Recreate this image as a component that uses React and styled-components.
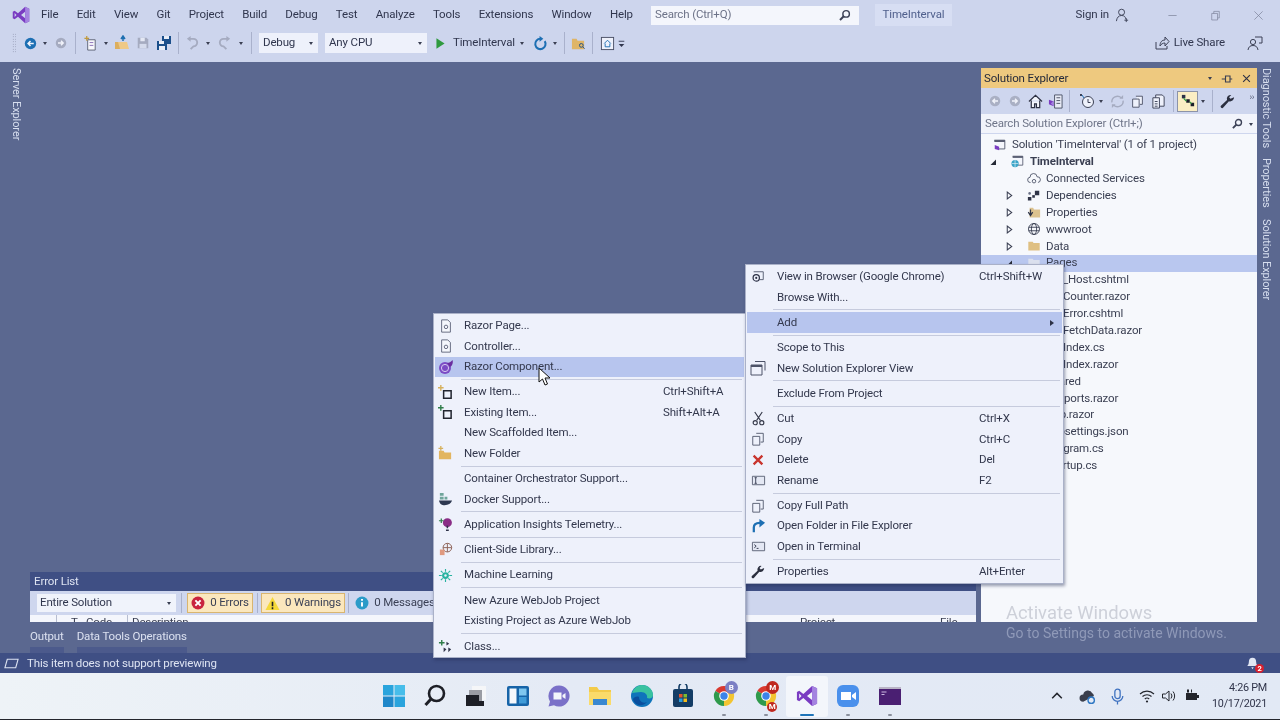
import React from 'react';
import styled, { createGlobalStyle } from 'styled-components';

const Global = createGlobalStyle`
  html, body { margin: 0; padding: 0; background: #5b6890; }
  * { box-sizing: border-box; }
`;

const FONT = `Roboto, "Noto Sans", "Liberation Sans", sans-serif`;

const Page = styled.div`
  position: relative; width: 1280px; height: 720px; overflow: hidden;
  display: flex; flex-direction: column; background: #5b6890;
  font: 11.5px/1 ${FONT}; letter-spacing: -0.15px; color: #2c3146; filter: blur(0.3px);
`;
const Header = styled.header`background: #cdd5ed; height: 62px; flex: none;`;
const MenuBar = styled.div`height: 30px; display: flex; align-items: center; padding-left: 12px;`;
const Menus = styled.nav`width: 621px; display: flex; gap: 18.3px; padding-left: 11px; flex: none; color: #30364e;`;
const SearchBox = styled.div`
  width: 208px; height: 19px; flex: none; background: #f4f6fc; display: flex; align-items: center;
  justify-content: space-between; padding: 0 8px 0 4px; color: #6d7388;
`;
const ProjectTag = styled.div`
  width: 77px; height: 22px; margin-left: 16px; flex: none; background: #d7def3; color: #4f5f8c;
  display: flex; align-items: center; justify-content: center;
`;
const SignIn = styled.div`margin-left: auto; display: flex; align-items: center; gap: 6px; margin-right: 21px; color: #30364e;`;
const WinBtn = styled.div`width: 43px; display: flex; justify-content: center; align-items: center; flex: none; color: #7a8098;`;

const ToolBar = styled.div`height: 32px; display: flex; align-items: center; padding-left: 12px; padding-bottom: 6px;`;
const Gripper = styled.div`
  width: 4px; height: 20px; margin-right: 4px; flex: none;
  background-image: radial-gradient(#8b92ab 0.7px, transparent 0.8px); background-size: 2.5px 2.5px;
`;
const Slot = styled.div`width: ${p => p.$w}px; margin-left: ${p => p.$ml || 0}px; display: flex; justify-content: center; align-items: center; flex: none;`;
const Sep = styled.div`width: ${p => p.$w || 6}px; height: ${p => p.$h || 22}px; flex: none; display: flex; justify-content: center;
  &::after { content: ''; width: 1px; height: 100%; background: #a9b1cc; }`;
const Caret = styled.span`width: 0; height: 0; flex: none; border-left: 2.5px solid transparent; border-right: 2.5px solid transparent; border-top: 3px solid ${p => p.$c || '#3a3f52'};`;
const Combo = styled.div`
  width: ${p => p.$w}px; height: 20px; margin-left: ${p => p.$ml || 0}px; flex: none; background: #eef1fb; color: #30364e;
  display: flex; align-items: center; justify-content: space-between; padding: 0 5px 0 4px;
`;
const ToolLabel = styled.span`width: 61px; flex: none; color: #30364e; white-space: nowrap;`;
const LiveShare = styled.div`margin-left: auto; display: flex; align-items: center; gap: 4px; color: #30364e;`;
const Feedback = styled.div`margin-left: 22px; margin-right: 17px; display: flex;`;

const Workspace = styled.main`flex: 1; display: flex; min-height: 0;`;
const Rail = styled.aside`
  width: ${p => p.$w}px; flex: none; display: flex; flex-direction: column; align-items: center; gap: 10.5px;
  padding: 6px ${p => p.$pr || 0}px 0 ${p => p.$pl || 0}px;
`;
const RailLabel = styled.span`writing-mode: vertical-rl; color: #d7deef; font-size: 11px; line-height: 12px; white-space: nowrap; letter-spacing: -0.1px;`;
const Center = styled.section`flex: 1; display: flex; flex-direction: column; justify-content: flex-end; min-width: 0;`;
const ErrorPanel = styled.div`margin-right: 5px; height: 50px; flex: none; display: flex; flex-direction: column;`;
const ErrorTitle = styled.div`height: 19px; background: #3f4f84; color: #dde3f2; display: flex; align-items: center; padding-left: 4px; flex: none;`;
const ErrorTools = styled.div`height: 24px; background: #ced6ee; display: flex; align-items: center; padding-left: 7px; flex: none;`;
const ScopeCombo = styled(Combo)`width: 139px; height: 18px; color: #30364e; padding-left: 3px; background: #f0f3fb;`;
const Filter = styled.div`
  height: 20px; padding: 0 2px; width: ${p => p.$w}px; flex: none; display: flex; align-items: center; gap: 5px; white-space: nowrap;
  justify-content: center;
  ${p => p.$on && 'background: #fbe7bd; border: 1px solid #d9b56f;'} color: #3b4156;
`;
const ColumnRow = styled.div`height: 7px; background: #f4f6fc; overflow: hidden; display: flex; flex: none; color: #3a3f52; line-height: 15px; position: relative;`;
const Col = styled.span`width: ${p => p.$w}px; flex: none; padding-left: ${p => p.$p || 0}px; border-left: ${p => p.$b ? '1px solid #b7bdd0' : 'none'};`;
const TabRow = styled.div`height: 31px; flex: none; display: flex; gap: 13px;`;
const Tab = styled.div`
  color: #dbe1f0; display: flex; flex-direction: column; justify-content: flex-end; position: relative; height: 31px; white-space: nowrap;
  &::before { content: ''; order: 2; height: 6px; background: #4c5a8c; margin-top: 5px; }
`;

const SolPanel = styled.section`width: 276px; flex: none; margin: 6px 0 31px; display: flex; flex-direction: column;`;
const SolTitle = styled.div`height: 20px; background: #eec97f; color: #252a3a; display: flex; align-items: center; padding: 1px 6px 0 3px; gap: 9px; flex: none;`;
const SolName = styled.span`margin-right: auto;`;
const SolTools = styled.div`height: 26px; background: #ced6ee; display: flex; align-items: center; padding-left: 4px; flex: none;`;
const ActiveTool = styled.div`width: 21px; height: 21px; margin-left: 3px; background: #fbeec4; border: 1px solid #8c93a8; display: flex; align-items: center; justify-content: center; flex: none;`;
const More = styled.span`margin-left: auto; margin-right: 3px; margin-top: -8px; color: #555b73; font-size: 9px; letter-spacing: -.5px;`;
const SolSearch = styled.div`height: 20px; background: #f2f4fb; display: flex; align-items: center; padding: 1px 4px 0 4px; color: #6f7589; gap: 6px; flex: none; border-bottom: 1px solid #ced6ee;`;
const SolSearchText = styled.span`margin-right: auto;`;
const Tree = styled.div`flex: 1; background: #f6f8fc; padding-top: 2.5px; overflow: hidden;`;
const TreeRow = styled.div`
  height: 16.9px; display: flex; align-items: center; padding-left: ${p => p.$pad}px; white-space: nowrap;
  color: #3a3f52; font-weight: ${p => p.$bold ? 700 : 400}; ${p => p.$sel && 'background: #b9c7ef;'}
`;
const Arrow = styled.span`width: 26px; flex: none; padding-left: 4px; display: flex;`;
const TreeIcon = styled.span`width: ${p => p.$w || 19}px; flex: none; display: flex;`;

const StatusBar = styled.footer`height: 20px; flex: none; background: #3f4f84; color: #dde3f2; display: flex; align-items: center; padding: 1px 21px 0 4px; gap: 8px;`;
const Bell = styled.span`margin-left: auto; position: relative; display: flex;`;
const BellCount = styled.b`position: absolute; right: -5px; bottom: -3px; width: 9px; height: 9px; border-radius: 50%; background: #d8202f; color: #fff; font-size: 7.5px; line-height: 9px; text-align: center;`;

const Taskbar = styled.footer`
  height: 47px; flex: none; padding: 0 13px 0 373px; display: flex; align-items: center;
  background: linear-gradient(90deg, #eef3f7 0%, #e4eaf5 45%, #e2e9f5 100%); border-bottom: 1.5px solid #23252c; color: #2b2f3d;
`;
const TaskSlot = styled.div`
  width: 41.35px; height: 41px; flex: none; display: flex; align-items: center; justify-content: center; position: relative;
  ${p => p.$active && 'background: #f3f6fb; border-radius: 3px;'}
  ${p => p.$mark && `&::after { content: ''; position: absolute; bottom: 1px; left: 50%; transform: translateX(-50%); height: 2px; border-radius: 1px;
    width: ${p.$active ? 14 : 4}px; background: ${p.$active ? '#1f74b8' : '#8a8f9c'}; }`}
`;
const TaskBadge = styled.b`
  position: absolute; width: ${p => p.$s || 13}px; height: ${p => p.$s || 13}px; border-radius: 50%; background: ${p => p.$c}; color: #fff;
  top: ${p => p.$t}px; left: ${p => p.$l}px; font-size: 8px; line-height: ${p => p.$s || 13}px; text-align: center;
`;
const Tray = styled.div`margin-left: auto; display: flex; align-items: center; color: #2b2f3d;`;
const TraySlot = styled.div`width: ${p => p.$w}px; flex: none; display: flex; justify-content: center;`;
const Clock = styled.div`margin-left: 5px; padding-top: 1px; width: 54px; display: flex; flex-direction: column; align-items: flex-end; gap: 4.5px; font-size: 10.8px; letter-spacing: -0.25px; color: #30344a;`;

const CtxMenu = styled.div`
  position: absolute; left: ${p => p.$l}px; top: ${p => p.$t}px; width: ${p => p.$w}px; height: ${p => p.$h}px;
  background: #eef1fb; border: 1px solid #aab1c8; padding: 1.5px 1px 1px; box-shadow: 1px 2px 3px rgba(30,40,80,.45); color: #33384d;
`;
const CtxRow = styled.div`
  height: 20.5px; display: grid; grid-template-columns: ${p => p.$ic}px ${p => p.$lb}px 1fr; align-items: center; white-space: nowrap;
  ${p => p.$hl && 'background: #b7c5ee;'}
`;
const CtxIcon = styled.span`display: flex; justify-content: center; align-items: center; padding-right: ${p => p.$pr}px;`;
const CtxSub = styled.span`justify-self: end; margin-right: 8px; width: 0; height: 0; border-left: 4px solid #2c3146; border-top: 3px solid transparent; border-bottom: 3px solid transparent;`;
const CtxSep = styled.div`height: 4.8px; margin-left: ${p => p.$m}px; margin-right: 2px; display: flex; align-items: center;
  &::after { content: ''; flex: 1; height: 1px; background: #c6cbdd; }`;
const Cursor = styled.svg`position: absolute; left: 538px; top: 367px; width: 13px; height: 19px;`;
const Watermark = styled.div`position: absolute; left: 1006px; top: 603px; color: #cdd0d9; font-size: 18.4px; line-height: 19px; letter-spacing: 0; white-space: nowrap;
  & small { display: block; font-size: 14px; color: #8f99b8; margin-top: 3px; line-height: 16px; }`;

const Svg = styled.svg.attrs(p => ({ viewBox: p.$vb || '0 0 16 16' }))`width: ${p => p.$s || 16}px; height: ${p => p.$s || 16}px; flex: none; display: block;`;

const VsLogo = ({ s = 18 }) => (
  <Svg $s={s} $vb="0 0 24 24">
    <path fill="#7a3cc2" d="M17.5 1 23 3.5v17L17.5 23 8 14.2l-4.5 3.4L1 16.4V7.6l2.5-1.2L8 9.8zM17.5 7.6 12 12l5.5 4.4zM3.5 9.4v5.2L6 12z" fillRule="evenodd" />
    <path fill="#a483e0" d="M17.5 1 23 3.5v17L17.5 23v-6.6V7.6z" />
  </Svg>
);
const Glass = ({ s = 13, c = '#3c4156' }) => (
  <Svg $s={s}><circle cx="10" cy="6" r="4" fill="none" stroke={c} strokeWidth="1.8" /><path d="M7 9 2.5 13.5" stroke={c} strokeWidth="2.4" /></Svg>
);
const CircleNav = ({ c = '#1d6fb3', s = 13, flip }) => (
  <Svg $s={s}><circle cx="8" cy="8" r="7" fill={c} /><path d={flip ? 'M4 8h7M8 5l3 3-3 3' : 'M12 8H5M8 5 5 8l3 3'} fill="none" stroke="#f2f4fb" strokeWidth="1.8" /></Svg>
);
const NewProj = () => (
  <Svg $s={15}><path d="M5 4h8v11H5z" fill="#f7f8fc" stroke="#5d6376" /><path d="M7 7h4M7 10h4" stroke="#8a6fb5" /><path d="M4 0v5M1.5 2.5h5" stroke="#c19a3c" strokeWidth="1.3" /></Svg>
);
const OpenFolder = () => (
  <Svg $s={16}><path d="M1 7h10l-1 7H1z" fill="#dcae5e" /><path d="M4 7l2 7h9l-2-7z" fill="#efc987" /><path d="M9 6V2M7 4l2-3 2 3" fill="none" stroke="#1e6fb0" strokeWidth="1.5" /></Svg>
);
const Save = ({ c = '#a5abc0' }) => (
  <Svg $s={14}><path d="M2 2h10l2 2v10H2z" fill={c} /><path d="M5 2h5v4H5z" fill="#e4e8f4" /><path d="M4 9h8v5H4z" fill="#d5dbec" /></Svg>
);
const SaveAll = () => (
  <Svg $s={16}><path d="M6 1h9v8H6z" fill="#1b4f8b" /><path d="M8 1h5v3H8z" fill="#e8edf7" /><path d="M1 6h10v9H1z" fill="#1b4f8b" /><path d="M3 6h5v3H3zM3 11h6v4H3z" fill="#e8edf7" /></Svg>
);
const Undo = ({ flip }) => (
  <Svg $s={15} style={flip ? { transform: 'scaleX(-1)' } : undefined}><path d="M4 3h5a4 4 0 0 1 0 8l-3 3" fill="none" stroke="#a5abc0" strokeWidth="2" /><path d="M6 0 2 3l4 3z" fill="#a5abc0" /></Svg>
);
const Play = () => (<Svg $s={13}><path d="M3 1.5 13 8 3 14.5z" fill="#2f9a3f" /></Svg>);
const Refresh = ({ s = 15 }) => (
  <Svg $s={s}><path d="M12.5 5.5A5.5 5.5 0 1 1 8 3" fill="none" stroke="#1d6fb3" strokeWidth="2.2" /><path d="M7 0l4 3-4 3z" fill="#1d6fb3" /></Svg>
);
const FindFolder = () => (
  <Svg $s={15}><path d="M1 3h5l1 2h7v9H1z" fill="#dfb567" /><circle cx="11" cy="10" r="2" fill="none" stroke="#1d4f8b" /><path d="m12.5 11.5 2 2" stroke="#1d4f8b" /></Svg>
);
const BoxHome = () => (
  <Svg $s={15}><rect x="1.5" y="1.5" width="13" height="13" fill="#eef1fb" stroke="#4a5066" /><path d="M4.5 8 8 4.5 11.5 8M5.5 8v3.5h5V8" fill="none" stroke="#1d6fb3" /></Svg>
);
const Grip = () => (<Svg $s={9}><path d="M3 4h10" stroke="#30364e" strokeWidth="1.6" /><path d="M3 9h10l-5 5z" fill="#30364e" /></Svg>);
const ShareIcon = () => (
  <Svg $s={16}><path d="M2 7v7h11v-3" fill="none" stroke="#3c4156" /><path d="M6 11c0-4 2-6 5-6V2l4 4.5L11 11V8c-2 0-4 1-5 3z" fill="none" stroke="#3c4156" /></Svg>
);
const UserPlus = () => (
  <Svg $s={15}><circle cx="7" cy="4.5" r="3.2" fill="none" stroke="#3c4156" /><path d="M1.5 14c.5-4 2.5-6 5.5-6s4 1.5 4.8 4M12 11v4M10 13h4" fill="none" stroke="#3c4156" /></Svg>
);
const FeedbackIco = () => (
  <Svg $s={16}><circle cx="6" cy="7" r="2.6" fill="none" stroke="#3c4156" /><path d="M1 15c.5-3 2-4.5 5-4.5s4.5 1.5 5 4.5M8 2h7v6h-3" fill="none" stroke="#3c4156" /></Svg>
);
const Home = () => (<Svg $s={15}><path d="M1 8 8 1.5 15 8M3.5 7v7.5h3.5v-4h2v4h3.5V7" fill="#f4f6fc" stroke="#2e3244" strokeWidth="1.3" /></Svg>);
const VsDoc = () => (<Svg $s={15}><path d="M7 1h8v14H7z" fill="#e8ebf6" stroke="#4d5368" /><path d="M9 4h4M9 7h4M9 10h4" stroke="#4d5368" /><path d="M1 6l5 2v5l-5-2z" fill="#7a3cc2" /><path d="M6 7 3 10l3 3z" fill="#a483e0" /></Svg>);
const ClockIco = () => (<Svg $s={16}><circle cx="9" cy="9" r="5.5" fill="#eef1fb" stroke="#3c4156" /><path d="M9 6v3.5h2.5" fill="none" stroke="#3c4156" /><path d="M1 1h2v2H1z" fill="#3c4156" /><path d="M3 2l2 3" stroke="#1d6fb3" /></Svg>);
const Sync = () => (<Svg $s={15}><path d="M2 9a6 6 0 0 1 10-5M14 7a6 6 0 0 1-10 5" fill="none" stroke="#a5abc0" strokeWidth="1.5" /><path d="M14 1v4h-4zM2 15v-4h4z" fill="#a5abc0" /></Svg>);
const CopyIco = ({ s = 14, c = '#3c4156' }) => (<Svg $s={s}><path d="M6 1.5h8v10H11" fill="#eef1fb" stroke={c} /><path d="M2 5h8v10H2z" fill="#eef1fb" stroke={c} /></Svg>);
const Pages2 = () => (<Svg $s={15}><path d="M5 1h7l2 2v10H5z" fill="#eef1fb" stroke="#3c4156" /><path d="M2 4h7v11H2z" fill="#eef1fb" stroke="#3c4156" /><path d="M4 8h3M4 10.5h3M4 13h3" stroke="#3c4156" /></Svg>);
const Hierarchy = () => (<Svg $s={14}><path d="M1 1h4v4H1z" fill="#2c3146" /><path d="M6 6h4v4H6zM11 10h4v4h-4z" fill="#1b1e2a" /><path d="M3 5l3 3M10 9l2 2" stroke="#2f9a3f" strokeWidth="1.4" /></Svg>);
const Wrench = ({ s = 15 }) => (<Svg $s={s}><path d="M15 3.5a4.2 4.2 0 0 1-5.5 4.2L3.5 14.5a1.6 1.6 0 0 1-2.5-2l6.5-6A4.2 4.2 0 0 1 12 1L9.7 3.5l1.5 1.6z" fill="#2b2f3f" /></Svg>);
const SolIco = () => (<Svg $s={14}><path d="M1.5 2.5h12v10h-7" fill="#f4f6fc" stroke="#4d5368" /><path d="M1.5 2.5h12v2h-12z" fill="#4d5368" /><path d="M2 8l5 2v4l-5-1.5z" fill="#7a3cc2" /></Svg>);
const ProjIco = () => (<Svg $s={13}><path d="M2 1.5h12.5v11H8" fill="#f4f6fc" stroke="#4d5368" /><path d="M2 1.5h12.5v2H2z" fill="#4d5368" /><circle cx="5" cy="10.5" r="4.5" fill="#3ba5c8" /><path d="M1 10.5h8M5 6v9" stroke="#e4f2f8" strokeWidth=".8" /></Svg>);
const CloudIco = () => (<Svg $s={14}><path d="M4 12a3 3 0 0 1-.5-6 4 4 0 0 1 8-.5 3 3 0 0 1 1 6.5" fill="none" stroke="#4d5368" /><circle cx="8" cy="10.5" r="2" fill="none" stroke="#4d5368" /></Svg>);
const DepsIco = () => (<Svg $s={14}><path d="M9 2h5v5H9zM1 9h4v4H1z" fill="#2f3447" /><path d="M6 7h3v3H6z" fill="#2f3447" /><circle cx="3" cy="5" r="1.5" fill="#6b7186" /></Svg>);
const PropFolder = () => (<Svg $s={14}><path d="M3 2h4l1 2h7v9H3z" fill="#dcc28f" /><path d="M4 4v6M1.5 7 4 11l2.5-4" fill="none" stroke="#2f3447" strokeWidth="1.4" /></Svg>);
const Globe = () => (<Svg $s={14}><circle cx="8" cy="8" r="6.3" fill="none" stroke="#353a4e" /><ellipse cx="8" cy="8" rx="3" ry="6.3" fill="none" stroke="#353a4e" /><path d="M2 6h12M2 10h12" stroke="#353a4e" /></Svg>);
const Folder = ({ c = '#dfc083' }) => (<Svg $s={14}><path d="M1.5 3h5l1 1.5h7V13h-13z" fill={c} /></Svg>);
const FileIco = () => (<Svg $s={13}><path d="M3 1h7l3 3v11H3z" fill="#f4f6fc" stroke="#6b7186" /></Svg>);
const ArrowOpen = () => (<Svg $s={8}><path d="M14 3v11H3z" fill="#252935" /></Svg>);
const ArrowClosed = () => (<Svg $s={9}><path d="M4 2v12l8-6z" fill="none" stroke="#3a3f52" strokeWidth="1.8" /></Svg>);

const PageDoc = () => (<Svg $s={14}><path d="M3 1h7l3 3v11H3z" fill="#f4f6fc" stroke="#565c74" /><circle cx="8" cy="9" r="2" fill="none" stroke="#565c74" /></Svg>);
const Razor = () => (<Svg $s={16}><circle cx="7" cy="9" r="6" fill="#7b4bc4" /><circle cx="7" cy="9" r="3.6" fill="none" stroke="#d5c9f0" /><path d="M9 4c2 0 4-1 5.5-3 1 3-.5 6-2.5 7z" fill="#6a2d9f" /></Svg>);
const NewItem = ({ c = '#d6b15e' }) => (<Svg $s={15}><path d="M6 6h8v8H6z" fill="#eef1fb" stroke="#22252f" strokeWidth="1.6" /><path d="M3 0v6M0 3h6" stroke={c} strokeWidth="1.5" /></Svg>);
const NewFolder = () => (<Svg $s={15}><path d="M1 5h5l1 2h7v7H1z" fill="#e2b560" /><path d="M3 0v5M.5 2.5h5" stroke="#d6b15e" strokeWidth="1.4" /></Svg>);
const Docker = () => (<Svg $s={15}><path d="M2 1h4v3H2zM2 5h4v3H2zM7 5h3v3H7z" fill="#6fa59b" /><path d="M1 9h14c-1 3-4 5-8 5-3 0-5-1-6-5z" fill="#2d3750" /></Svg>);
const Insights = () => (<Svg $s={15}><circle cx="10" cy="6" r="4.8" fill="#8a2d86" /><path d="M10 9v3M8.5 14h3" stroke="#30344a" strokeWidth="1.6" /><path d="M1 4h5M3.5 1.5v5" stroke="#2f7d4a" strokeWidth="1.3" /></Svg>);
const ClientLib = () => (<Svg $s={15}><circle cx="10" cy="6" r="4.6" fill="none" stroke="#8b5e52" /><path d="M5.5 6h9M10 1.5v9" stroke="#8b5e52" /><path d="M2 8h5v6H2z" fill="#e09a80" /></Svg>);
const Ml = () => (<Svg $s={15}><circle cx="8" cy="8" r="3.6" fill="#27b3a0" /><circle cx="8" cy="8" r="1.3" fill="#eef1fb" /><path d="M8 1v3M8 12v3M1 8h3M12 8h3M3 3l2 2M11 11l2 2M13 3l-2 2M5 11l-2 2" stroke="#27b3a0" strokeWidth="1.2" /></Svg>);
const ClassIco = () => (<Svg $s={15}><path d="M1 4h6M4 1v6" stroke="#2f7d4a" strokeWidth="1.5" /><path d="M9 3l3 2-3 2zM6 9l3 2-3 3zM11 9l3 2-3 3z" fill="#30344a" /></Svg>);
const ViewB = () => (<Svg $s={14}><path d="M3 2h11v9h-4" fill="none" stroke="#4d5368" /><circle cx="6" cy="9" r="3.6" fill="#eef1fb" stroke="#2c3146" strokeWidth="1.4" /><circle cx="6" cy="9" r="1.2" fill="#2c3146" /></Svg>);
const NewView = () => (<Svg $s={16}><path d="M5 1.5h10v9" fill="none" stroke="#4d5368" /><path d="M1 5h11v10H1z" fill="#eef1fb" stroke="#4d5368" /><path d="M1 5h11v2H1z" fill="#4d5368" /></Svg>);
const Cut = () => (<Svg $s={15}><path d="M4 1l6 9M12 1 6 10" stroke="#343848" strokeWidth="1.2" /><circle cx="4.5" cy="12.5" r="2.2" fill="none" stroke="#343848" strokeWidth="1.2" /><circle cx="11.5" cy="12.5" r="2.2" fill="none" stroke="#343848" strokeWidth="1.2" /></Svg>);
const Del = () => (<Svg $s={14}><path d="M3 3l10 10M13 3 3 13" stroke="#c8342d" strokeWidth="2.6" /></Svg>);
const Rename = () => (<Svg $s={15}><path d="M1.5 3.5h13v9h-13z" fill="#e4e8f4" stroke="#5d6376" /><path d="M5 5v6M3.8 5h2.4M3.8 11h2.4" stroke="#3c4156" /></Svg>);
const OpenArrow = () => (<Svg $s={15}><path d="M3 14V9c0-3 2-5 6-5h2" fill="none" stroke="#1d6fb3" strokeWidth="2.4" /><path d="M9 0l6 4-6 5z" fill="#1d6fb3" /></Svg>);
const TermIco = () => (<Svg $s={15}><path d="M1.5 3.5h13v9h-13z" fill="#e4e8f4" stroke="#5d6376" /><path d="M3.5 6l2 1.7-2 1.7M6 10h2" fill="none" stroke="#2c3146" /></Svg>);

const ErrIco = () => (<Svg $s={14}><circle cx="8" cy="8" r="7.4" fill="#c9243f" /><path d="M5 5l6 6M11 5l-6 6" stroke="#fff" strokeWidth="2.2" /></Svg>);
const WarnIco = () => (<Svg $s={15}><path d="M8 1l7.5 14H.5z" fill="#f5d83a" /><path d="M8 6v5M8 12v2" stroke="#222" strokeWidth="1.7" /></Svg>);
const InfoIco = () => (<Svg $s={14}><circle cx="8" cy="8" r="7.4" fill="#2b9bc8" /><path d="M8 7v5M8 3.5v2" stroke="#fff" strokeWidth="2.2" /></Svg>);
const Preview = () => (<Svg $s={15} $vb="0 0 16 12"><path d="M3.5 1.5H15l-2.5 9H1z" fill="none" stroke="#dde3f2" strokeWidth="1.2" /></Svg>);
const BellIco = () => (<Svg $s={13}><path d="M8 1c3 0 4.500 2 4.500 5s1.500 4 2 5h-13c.5-1 2-2 2-5s1.500-5 4.500-5zM6.500 12.500h3L8 15z" fill="#e1e6f3" /></Svg>);

const T = ({ children }) => <Svg $s={24} $vb="0 0 24 24">{children}</Svg>;
const WinIco = () => (<T><path d="M1 1h10.500v10.500H1z" fill="#2aa4dd" /><path d="M12.500 1H23v10.500H12.500z" fill="#47bdea" /><path d="M1 12.500h10.500V23H1z" fill="#1f87c9" /><path d="M12.500 12.500H23V23H12.500z" fill="#2aa4dd" /></T>);
const TaskSearch = () => (<T><circle cx="13.500" cy="9.500" r="7.500" fill="none" stroke="#1d1f26" strokeWidth="2.600" /><path d="M8 15l-5.500 6" stroke="#1d1f26" strokeWidth="3" /></T>);
const TaskView = () => (<T><path d="M8 2h14v14H8z" fill="#f5f6f8" /><path d="M5 6h13v12H5z" fill="#9a9ca3" /><path d="M2 11h13v11H2z" fill="#1d1f26" /><path d="M15 17h5v5h-5z" fill="#1d1f26" /></T>);
const Widgets = () => (<T><rect x="1" y="2" width="22" height="20" rx="2" fill="#1764a8" /><path d="M3.500 4.500h7v15h-7z" fill="#f5f8fc" /><path d="M13 4.500h7.500v7H13z" fill="#7fc6ee" /><path d="M13 13h7.500v6.500H13z" fill="#3f9bd8" /></T>);
const Chat = () => (<T><path d="M12 1.500a10.500 10.500 0 1 1-5 19.700L1.500 22.500 3 17.400A10.500 10.500 0 0 1 12 1.500z" fill="#7a70c8" /><path d="M6.500 8.500h8v7h-8zM15.500 11l3-2v6l-3-2z" fill="#f4f5fb" /></T>);
const Explorer = () => (<T><path d="M1 3h8l2 3h12v15H1z" fill="#f3cb4a" /><path d="M1 8h22v13H1z" fill="#fadb6a" /><path d="M5 15h14v6H5z" fill="#3a88d0" /></T>);
const Edge = () => (<T><circle cx="12" cy="12" r="11" fill="#0f74bb" /><path d="M2 9C4 3 9 1 12 1c6 0 11 4.500 11 10 0 3-3 4-6 3 1-3-2-6-6-6-4 0-7 1-9 1z" fill="#39c2a0" /><path d="M9 13c0 4 4 7 8 5-5 6-13 3-14-3 1-2 4-3 6-2z" fill="#0a4f9e" /></T>);
const Store = () => (<T><path d="M8 5V3a4 4 0 0 1 8 0v2" fill="none" stroke="#143d66" strokeWidth="1.600" /><rect x="2" y="5" width="20" height="18" rx="2" fill="#143d66" /><path d="M8 10h3.500v3.500H8z" fill="#e5552c" /><path d="M12.500 10H16v3.500h-3.500z" fill="#7dbb2f" /><path d="M8 14.500h3.500V18H8z" fill="#2a9fe0" /><path d="M12.500 14.500H16V18h-3.500z" fill="#f5bc1c" /></T>);
const Chrome = () => (<T><path d="M12 12 3.300 7a10 10 0 0 1 17.400 0z" fill="#d9392f" /><path d="M12 12l8.700-5A10 10 0 0 1 12 22z" fill="#f3c531" /><path d="M12 12v10A10 10 0 0 1 3.300 7z" fill="#2f9a4c" /><circle cx="12" cy="12" r="4.800" fill="#fff" /><circle cx="12" cy="12" r="3.700" fill="#3d83e8" /></T>);
const ZoomIco = () => (<T><rect x="1" y="1" width="22" height="22" rx="6" fill="#4a90ec" /><path d="M5 8h10v8H5zM16 11l4-3v8l-4-3z" fill="#fff" /></T>);
const TermApp = () => (<T><path d="M1 3h22v18H1z" fill="#4a1f72" /><path d="M1 3h22v2H1z" fill="#b9b4c6" /><path d="M3.500 8h5M3.500 10.500h3" stroke="#c9b8e0" strokeWidth="1.200" /></T>);
const Chevron = () => (<Svg $s={14}><path d="M2.500 10.500 8 5l5.500 5.500" fill="none" stroke="#23252c" strokeWidth="1.700" /></Svg>);
const CloudSync = () => (<Svg $s={17}><path d="M4 13a3.500 3.500 0 0 1 0-7 4.500 4.500 0 0 1 8.500-1c1 .5 1.500 1.500 1.500 2.500" fill="#3a3e4c" /><circle cx="11.500" cy="11.500" r="3" fill="none" stroke="#2f78c4" strokeWidth="1.300" /></Svg>);
const Mic = () => (<Svg $s={17}><rect x="5.500" y="1" width="5" height="9" rx="2.500" fill="none" stroke="#3f72c0" strokeWidth="1.200" /><path d="M3 7.500a5 5 0 0 0 10 0M8 12.500V15.500" fill="none" stroke="#3f72c0" strokeWidth="1.200" /></Svg>);
const Wifi = () => (<Svg $s={16}><path d="M1 6a10 10 0 0 1 14 0M3.500 8.500a6.500 6.500 0 0 1 9 0M5.800 11a3.200 3.200 0 0 1 4.400 0" fill="none" stroke="#23252c" strokeWidth="1.100" /><circle cx="8" cy="13.500" r="1.100" fill="#23252c" /></Svg>);
const Speaker = () => (<Svg $s={16}><path d="M1.500 6h3L8 3v10L4.500 10h-3z" fill="none" stroke="#23252c" /><path d="M10 5.500a4 4 0 0 1 0 5M12 3.500a7 7 0 0 1 0 9" fill="none" stroke="#23252c" /></Svg>);
const Battery = () => (<Svg $s={16}><path d="M2 5h11v7H2z" fill="#23252c" /><path d="M13 7h2v3h-2zM3 1.500h2v3H3zM7 1.500h1v3H7z" fill="#23252c" /></Svg>);

const menuBar = ['File', 'Edit', 'View', 'Git', 'Project', 'Build', 'Debug', 'Test', 'Analyze', 'Tools', 'Extensions', 'Window', 'Help'];
const tree = [
  { t: "Solution 'TimeInterval' (1 of 1 project)", d: 0, i: <SolIco /> },
  { t: 'TimeInterval', d: 1, i: <ProjIco />, a: 'open', bold: true },
  { t: 'Connected Services', d: 2, i: <CloudIco /> },
  { t: 'Dependencies', d: 2, i: <DepsIco />, a: 'closed' },
  { t: 'Properties', d: 2, i: <PropFolder />, a: 'closed' },
  { t: 'wwwroot', d: 2, i: <Globe />, a: 'closed' },
  { t: 'Data', d: 2, i: <Folder />, a: 'closed' },
  { t: 'Pages', d: 2, i: <Folder c="#dbe0ee" />, a: 'open', sel: true },
  { t: '_Host.cshtml', d: 3, i: <FileIco /> },
  { t: 'Counter.razor', d: 3, i: <FileIco /> },
  { t: 'Error.cshtml', d: 3, i: <FileIco /> },
  { t: 'FetchData.razor', d: 3, i: <FileIco /> },
  { t: 'Index.cs', d: 3, i: <FileIco /> },
  { t: 'Index.razor', d: 3, i: <FileIco /> },
  { t: 'Shared', d: 2, i: <Folder />, a: 'closed' },
  { t: '_Imports.razor', d: 2, i: <FileIco /> },
  { t: 'App.razor', d: 2, i: <FileIco /> },
  { t: 'appsettings.json', d: 2, i: <FileIco /> },
  { t: 'Program.cs', d: 2, i: <FileIco /> },
  { t: 'Startup.cs', d: 2, i: <FileIco /> },
];
const treePad = { 0: 12, 1: 4, 2: 20, 3: 37 };

const leftMenu = [
  { t: 'Razor Page...', i: <PageDoc /> }, { t: 'Controller...', i: <PageDoc /> }, { t: 'Razor Component...', i: <Razor />, hl: true }, 0,
  { t: 'New Item...', i: <NewItem />, k: 'Ctrl+Shift+A' }, { t: 'Existing Item...', i: <NewItem c="#2f7d4a" />, k: 'Shift+Alt+A' },
  { t: 'New Scaffolded Item...' }, { t: 'New Folder', i: <NewFolder /> }, 0,
  { t: 'Container Orchestrator Support...' }, { t: 'Docker Support...', i: <Docker /> }, 0,
  { t: 'Application Insights Telemetry...', i: <Insights /> }, 0,
  { t: 'Client-Side Library...', i: <ClientLib /> }, 0,
  { t: 'Machine Learning', i: <Ml /> }, 0,
  { t: 'New Azure WebJob Project' }, { t: 'Existing Project as Azure WebJob' }, 0,
  { t: 'Class...', i: <ClassIco /> },
];
const rightMenu = [
  { t: 'View in Browser (Google Chrome)', i: <ViewB />, k: 'Ctrl+Shift+W' }, { t: 'Browse With...' }, 0,
  { t: 'Add', hl: true, sub: true }, 0,
  { t: 'Scope to This' }, { t: 'New Solution Explorer View', i: <NewView /> }, 0,
  { t: 'Exclude From Project' }, 0,
  { t: 'Cut', i: <Cut />, k: 'Ctrl+X' }, { t: 'Copy', i: <CopyIco c="#4d5368" />, k: 'Ctrl+C' }, { t: 'Delete', i: <Del />, k: 'Del' }, { t: 'Rename', i: <Rename />, k: 'F2' }, 0,
  { t: 'Copy Full Path', i: <CopyIco c="#4d5368" /> }, { t: 'Open Folder in File Explorer', i: <OpenArrow /> }, { t: 'Open in Terminal', i: <TermIco /> }, 0,
  { t: 'Properties', i: <Wrench s={14} />, k: 'Alt+Enter' },
];

const ContextMenu = ({ items, l, t, w, h, ic, lb, sep, pr }) => (
  <CtxMenu $l={l} $t={t} $w={w} $h={h}>
    {items.map((m, n) => m === 0
      ? <CtxSep key={n} $m={sep} />
      : (
        <CtxRow key={n} $ic={ic} $lb={lb} $hl={m.hl}>
          <CtxIcon $pr={pr}>{m.i}</CtxIcon>
          <span>{m.t}</span>
          {m.sub ? <CtxSub /> : <span>{m.k}</span>}
        </CtxRow>
      ))}
  </CtxMenu>
);

export default function App() {
  return (
    <Page>
      <Global />
      <Header>
        <MenuBar>
          <VsLogo />
          <Menus>{menuBar.map(m => <span key={m}>{m}</span>)}</Menus>
          <SearchBox>Search (Ctrl+Q)<Glass /></SearchBox>
          <ProjectTag>TimeInterval</ProjectTag>
          <SignIn>Sign in<UserPlus /></SignIn>
          <WinBtn><Svg $s={11}><path d="M2 8h12" stroke="currentColor" /></Svg></WinBtn>
          <WinBtn><Svg $s={11}><path d="M2.500 5h8.500v9.500H2.500zM5.500 5V2h8v9.500H11" fill="none" stroke="currentColor" /></Svg></WinBtn>
          <WinBtn><Svg $s={11}><path d="M2 2l12 12M14 2 2 14" stroke="currentColor" /></Svg></WinBtn>
        </MenuBar>
        <ToolBar>
          <Gripper />
          <Slot $w={20}><CircleNav /></Slot><Slot $w={10}><Caret /></Slot>
          <Slot $w={22}><CircleNav c="#a5abc0" s={12} flip /></Slot>
          <Sep />
          <Slot $w={24}><NewProj /></Slot><Slot $w={8}><Caret /></Slot>
          <Slot $w={24}><OpenFolder /></Slot><Slot $w={18}><Save /></Slot><Slot $w={24}><SaveAll /></Slot>
          <Sep $w={4} />
          <Slot $w={24}><Undo /></Slot><Slot $w={8}><Caret c="#8d93a8" /></Slot>
          <Slot $w={24}><Undo flip /></Slot><Slot $w={10}><Caret c="#8d93a8" /></Slot>
          <Sep $w={10} />
          <Combo $w={59} $ml={3}>Debug<Caret /></Combo>
          <Combo $w={102} $ml={7}>Any CPU<Caret /></Combo>
          <Slot $w={26}><Play /></Slot>
          <ToolLabel>TimeInterval</ToolLabel>
          <Slot $w={16}><Caret /></Slot>
          <Slot $w={20}><Refresh /></Slot><Slot $w={10}><Caret /></Slot>
          <Sep $w={9} />
          <Slot $w={18}><FindFolder /></Slot>
          <Sep $w={10} />
          <Slot $w={20}><BoxHome /></Slot>
          <Slot $w={8}><Grip /></Slot>
          <LiveShare><ShareIcon />Live Share</LiveShare>
          <Feedback><FeedbackIco /></Feedback>
        </ToolBar>
      </Header>

      <Workspace>
        <Rail $w={30} $pl={2}><RailLabel>Server Explorer</RailLabel></Rail>
        <Center>
          <ErrorPanel>
            <ErrorTitle>Error List</ErrorTitle>
            <ErrorTools>
              <ScopeCombo $w={139}>Entire Solution<Caret /></ScopeCombo>
              <Sep $w={11} $h={20} />
              <Filter $w={66} $on><ErrIco />0 Errors</Filter>
              <Sep $w={8} $h={20} />
              <Filter $w={84} $on><WarnIco />0 Warnings</Filter>
              <Sep $w={6} $h={20} />
              <Filter $w={88}><InfoIco />0 Messages</Filter>
            </ErrorTools>
            <ColumnRow>
              <Col $w={26} />
              <Col $w={30} $b $p={14}>T</Col>
              <Col $w={41}>Code</Col>
              <Col $w={673} $b $p={4}>Description</Col>
              <Col $w={140}>Project</Col>
              <Col $w={30}>File</Col>
            </ColumnRow>
          </ErrorPanel>
          <TabRow><Tab>Output</Tab><Tab>Data Tools Operations</Tab></TabRow>
        </Center>
        <SolPanel>
          <SolTitle>
            <SolName>Solution Explorer</SolName>
            <Caret />
            <Svg $s={12}><path d="M1 8h5M6 4v8h6V4zM12 8h3" fill="none" stroke="#3a3f52" strokeWidth="1.500" /></Svg>
            <Svg $s={9}><path d="M2 2l12 12M14 2 2 14" stroke="#2c3146" strokeWidth="2" /></Svg>
          </SolTitle>
          <SolTools>
            <Slot $w={20}><CircleNav c="#aab0c4" s={12} /></Slot>
            <Slot $w={20}><CircleNav c="#aab0c4" s={12} flip /></Slot>
            <Slot $w={20}><Home /></Slot>
            <Slot $w={20}><VsDoc /></Slot>
            <Sep $w={8} />
            <Slot $w={22} $ml={3}><ClockIco /></Slot>
            <Slot $w={5}><Caret /></Slot>
            <Slot $w={28}><Sync /></Slot>
            <Slot $w={12}><CopyIco s={13} /></Slot>
            <Slot $w={30}><Pages2 /></Slot>
            <Sep $w={1} />
            <ActiveTool><Hierarchy /></ActiveTool>
            <Slot $w={10}><Caret /></Slot>
            <Sep $w={8} />
            <Slot $w={22}><Wrench /></Slot>
            <More>››</More>
          </SolTools>
          <SolSearch>
            <SolSearchText>Search Solution Explorer (Ctrl+;)</SolSearchText>
            <Glass s={12} /><Caret />
          </SolSearch>
          <Tree>
            {tree.map(r => (
              <TreeRow key={r.t} $pad={treePad[r.d]} $bold={r.bold} $sel={r.sel}>
                {r.d > 0 && <Arrow>{r.a === 'open' ? <ArrowOpen /> : r.a === 'closed' ? <ArrowClosed /> : null}</Arrow>}
                <TreeIcon>{r.i}</TreeIcon>{r.t}
              </TreeRow>
            ))}
          </Tree>
        </SolPanel>
        <Rail $w={23} $pr={6}>
          <RailLabel>Diagnostic Tools</RailLabel>
          <RailLabel>Properties</RailLabel>
          <RailLabel>Solution Explorer</RailLabel>
        </Rail>
      </Workspace>

      <StatusBar>
        <Preview />This item does not support previewing
        <Bell><BellIco /><BellCount>2</BellCount></Bell>
      </StatusBar>

      <Taskbar>
        <TaskSlot><WinIco /></TaskSlot>
        <TaskSlot><TaskSearch /></TaskSlot>
        <TaskSlot><TaskView /></TaskSlot>
        <TaskSlot><Widgets /></TaskSlot>
        <TaskSlot><Chat /></TaskSlot>
        <TaskSlot><Explorer /></TaskSlot>
        <TaskSlot><Edge /></TaskSlot>
        <TaskSlot><Store /></TaskSlot>
        <TaskSlot $mark><Chrome /><TaskBadge $c="#7b7fc4" $t={5} $l={21}>B</TaskBadge></TaskSlot>
        <TaskSlot $mark><Chrome /><TaskBadge $c="#c0281f" $t={5} $l={21}>M</TaskBadge><TaskBadge $c="#c0281f" $s={10} $t={26} $l={22}>M</TaskBadge></TaskSlot>
        <TaskSlot $mark $active><VsLogo s={22} /></TaskSlot>
        <TaskSlot $mark><ZoomIco /></TaskSlot>
        <TaskSlot $mark><TermApp /></TaskSlot>
        <Tray>
          <TraySlot $w={30}><Chevron /></TraySlot>
          <TraySlot $w={30}><CloudSync /></TraySlot>
          <TraySlot $w={30}><Mic /></TraySlot>
          <TraySlot $w={30}><Wifi /></TraySlot>
          <TraySlot $w={14}><Speaker /></TraySlot>
          <TraySlot $w={32}><Battery /></TraySlot>
          <Clock><span>4:26 PM</span><span>10/17/2021</span></Clock>
        </Tray>
      </Taskbar>

      <ContextMenu items={leftMenu} l={433} t={313} w={313} h={345} ic={29} lb={199} sep={26} pr={8} />
      <ContextMenu items={rightMenu} l={745} t={264} w={319} h={320} ic={30} lb={202} sep={26} pr={8} />
      <Cursor viewBox="0 0 13 19"><path d="M1 1v14l3.500-3 2.500 6 2.500-1-2.500-6h5z" fill="#fff" stroke="#111" strokeWidth="1" /></Cursor>
      <Watermark>Activate Windows<small>Go to Settings to activate Windows.</small></Watermark>
    </Page>
  );
}
